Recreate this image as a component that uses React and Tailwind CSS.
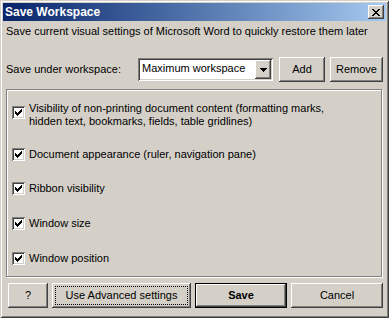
import React from "react";

const raised =
  "shadow-[inset_-1px_-1px_#404040,inset_1px_1px_#ffffff,inset_-2px_-2px_#808080,inset_2px_2px_#d4d0c8]";

function Check() {
  return (
    <div className="w-[13px] h-[13px] shrink-0 bg-white shadow-[inset_1px_1px_#808080,inset_-1px_-1px_#ffffff,inset_2px_2px_#404040,inset_-2px_-2px_#d4d0c8] flex items-center justify-center">
      <svg width="7" height="7" viewBox="0 0 7 7" shapeRendering="crispEdges">
        <path
          fill="#000"
          d="M6 0h1v3h-1zM5 1h1v3h-1zM4 2h1v3h-1zM0 2h1v3h-1zM1 3h1v3h-1zM2 4h1v3h-1zM3 3h1v3h-1z"
        />
      </svg>
    </div>
  );
}

function Row({ children, className = "" }) {
  return (
    <div className={"flex items-center gap-[4px] " + className}>
      <Check />
      <span>{children}</span>
    </div>
  );
}

export default function App() {
  return (
    <div
      className="w-[389px] h-[318px] bg-[#d4d0c8] p-[3px] flex flex-col text-[11px] leading-[13px] text-black shadow-[inset_1px_1px_#d4d0c8,inset_-1px_-1px_#404040,inset_2px_2px_#ffffff,inset_-2px_-2px_#808080]"
      style={{ fontFamily: '"Liberation Sans", Arial, sans-serif' }}
    >
      {/* Title bar */}
      <div className="h-[18px] shrink-0 flex items-center justify-between bg-linear-to-r from-[#0a246a] to-[#a6caf0] pl-[2px] pr-[2px]">
        <span className="text-white font-bold text-[12px] leading-none">Save Workspace</span>
        <div className={"w-[16px] h-[14px] bg-[#d4d0c8] flex items-center justify-center " + raised}>
          <svg width="8" height="7" viewBox="0 0 8 7" shapeRendering="crispEdges">
            <path
              fill="#000"
              d="M0 0h2v1h-2zM6 0h2v1h-2zM1 1h2v1h-2zM5 1h2v1h-2zM2 2h4v1h-4zM3 3h2v1h-2zM2 4h4v1h-4zM1 5h2v1h-2zM5 5h2v1h-2zM0 6h2v1h-2zM6 6h2v1h-2z"
            />
          </svg>
        </div>
      </div>

      {/* Subtitle */}
      <div className="mt-[4px] px-[3px]">
        Save current visual settings of Microsoft Word to quickly restore them later
      </div>

      {/* Workspace row */}
      <div className="mt-[19px] h-[25px] flex items-center pl-[3px]">
        <span className="w-[132px] shrink-0">Save under workspace:</span>
        <div className="w-[135px] h-[23px] shrink-0 bg-white flex items-stretch p-[2px] shadow-[inset_1px_1px_#808080,inset_-1px_-1px_#ffffff,inset_2px_2px_#404040,inset_-2px_-2px_#d4d0c8]">
          <span className="flex-1 pl-[2px] pt-[2px]">Maximum workspace</span>
          <div className={"w-[16px] bg-[#d4d0c8] flex items-center justify-center " + raised}>
            <svg width="7" height="4" viewBox="0 0 7 4" shapeRendering="crispEdges">
              <path fill="#000" d="M0 0h7v1h-7zM1 1h5v1h-5zM2 2h3v1h-3zM3 3h1v1h-1z" />
            </svg>
          </div>
        </div>
        <div className={"ml-[6px] w-[46px] h-[25px] shrink-0 bg-[#d4d0c8] flex items-center justify-center " + raised}>
          Add
        </div>
        <div className={"ml-[5px] w-[53px] h-[25px] shrink-0 bg-[#d4d0c8] flex items-center justify-center " + raised}>
          Remove
        </div>
      </div>

      {/* Group box */}
      <div className="mt-[7px] ml-[3px] mr-[4px] h-[188px] shrink-0 border border-[#808080] shadow-[inset_1px_1px_#ffffff,1px_1px_#ffffff] pl-[5px] pt-[12px] flex flex-col">
        <div className="flex items-start gap-[4px]">
          <div className="mt-[4px]">
            <Check />
          </div>
          <span>
            Visibility of non-printing document content (formatting marks,
            <br />
            hidden text, bookmarks, fields, table gridlines)
          </span>
        </div>
        <Row className="mt-[18px] h-[16px]">Document appearance (ruler, navigation pane)</Row>
        <Row className="mt-[18px] h-[16px]">Ribbon visibility</Row>
        <Row className="mt-[19px] h-[16px]">Window size</Row>
        <Row className="mt-[19px] h-[16px]">Window position</Row>
      </div>

      {/* Bottom buttons */}
      <div className="mt-[6px] h-[25px] flex pl-[5px] gap-[4px]">
        <div className={"w-[40px] bg-[#d4d0c8] flex items-center justify-center " + raised}>?</div>
        <div className={"w-[139px] bg-[#d4d0c8] flex items-center justify-center outline-1 outline-dotted outline-black -outline-offset-4 " + raised}>
          Use Advanced settings
        </div>
        <div className="w-[92px] border border-black bg-[#d4d0c8] flex items-center justify-center font-bold shadow-[inset_-1px_-1px_#404040,inset_1px_1px_#ffffff,inset_-2px_-2px_#808080]">
          Save
        </div>
        <div className={"w-[92px] bg-[#d4d0c8] flex items-center justify-center " + raised}>Cancel</div>
      </div>
    </div>
  );
}
